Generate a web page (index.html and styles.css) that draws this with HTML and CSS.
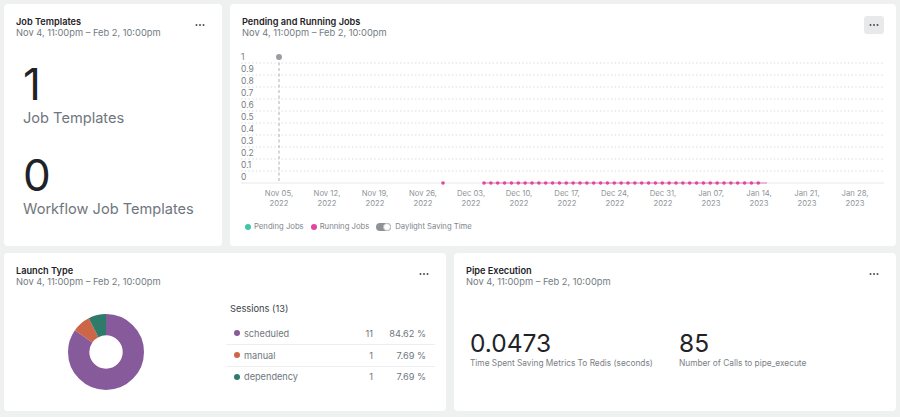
FILE: index.html
```html
<!DOCTYPE html>
<html lang="en">
<head>
<meta charset="utf-8">
<title>Dashboard</title>
<link rel="stylesheet" href="styles.css">
</head>
<body>
<main class="dashboard">
  <div class="row row-top">
    <section class="card card-jobs">
      <header class="card-header">
        <div class="titles">
          <h2 class="title">Job Templates</h2>
          <div class="subtitle">Nov 4, 11:00pm – Feb 2, 10:00pm</div>
        </div>
        <button class="menu" aria-label="More"><svg width="10" height="4" viewBox="0 0 10 4"><circle cx="1.5" cy="2" r="1"/><circle cx="5" cy="2" r="1"/><circle cx="8.5" cy="2" r="1"/></svg></button>
      </header>
      <div class="counts">
        <div class="count">
          <div class="count-value">1</div>
          <div class="count-label">Job Templates</div>
        </div>
        <div class="count">
          <div class="count-value">0</div>
          <div class="count-label">Workflow Job Templates</div>
        </div>
      </div>
    </section>

    <section class="card card-chart">
      <header class="card-header">
        <div class="titles">
          <h2 class="title">Pending and Running Jobs</h2>
          <div class="subtitle">Nov 4, 11:00pm – Feb 2, 10:00pm</div>
        </div>
        <button class="menu menu-active" aria-label="More"><svg width="10" height="4" viewBox="0 0 10 4"><circle cx="1.5" cy="2" r="1"/><circle cx="5" cy="2" r="1"/><circle cx="8.5" cy="2" r="1"/></svg></button>
      </header>
      <svg class="chart" width="642" height="160" viewBox="0 0 642 160">
        <g class="grid">
          <line x1="-1" x2="642" y1="13" y2="13"/>
          <line x1="-1" x2="642" y1="25" y2="25"/>
          <line x1="-1" x2="642" y1="37" y2="37"/>
          <line x1="-1" x2="642" y1="49" y2="49"/>
          <line x1="-1" x2="642" y1="61" y2="61"/>
          <line x1="-1" x2="642" y1="73" y2="73"/>
          <line x1="-1" x2="642" y1="85" y2="85"/>
          <line x1="-1" x2="642" y1="97" y2="97"/>
          <line x1="-1" x2="642" y1="109" y2="109"/>
          <line x1="-1" x2="642" y1="121" y2="121"/>
        </g>
        <line class="axis" x1="-1" x2="642" y1="133" y2="133"/>
        <g class="ylabels">
          <text x="-1" y="10">1</text>
          <text x="-1" y="22">0.9</text>
          <text x="-1" y="34">0.8</text>
          <text x="-1" y="46">0.7</text>
          <text x="-1" y="58">0.6</text>
          <text x="-1" y="70">0.5</text>
          <text x="-1" y="82">0.4</text>
          <text x="-1" y="94">0.3</text>
          <text x="-1" y="106">0.2</text>
          <text x="-1" y="118">0.1</text>
          <text x="-1" y="130">0</text>
        </g>
        <line class="marker" x1="37" x2="37" y1="7" y2="133"/>
        <circle class="marker-dot" cx="37" cy="7" r="3"/>
        <g class="xlabels">
          <text x="37" y="146.4">Nov 05,</text><text x="37" y="155.6">2022</text>
          <text x="85" y="146.4">Nov 12,</text><text x="85" y="155.6">2022</text>
          <text x="133" y="146.4">Nov 19,</text><text x="133" y="155.6">2022</text>
          <text x="181" y="146.4">Nov 26,</text><text x="181" y="155.6">2022</text>
          <text x="229" y="146.4">Dec 03,</text><text x="229" y="155.6">2022</text>
          <text x="277" y="146.4">Dec 10,</text><text x="277" y="155.6">2022</text>
          <text x="325" y="146.4">Dec 17,</text><text x="325" y="155.6">2022</text>
          <text x="373" y="146.4">Dec 24,</text><text x="373" y="155.6">2022</text>
          <text x="421" y="146.4">Dec 31,</text><text x="421" y="155.6">2022</text>
          <text x="469" y="146.4">Jan 07,</text><text x="469" y="155.6">2023</text>
          <text x="517" y="146.4">Jan 14,</text><text x="517" y="155.6">2023</text>
          <text x="565" y="146.4">Jan 21,</text><text x="565" y="155.6">2023</text>
          <text x="613" y="146.4">Jan 28,</text><text x="613" y="155.6">2023</text>
        </g>
        <line class="running-line" x1="242" x2="525" y1="133" y2="133"/>
        <g class="running-dots" id="dots">
          <circle cx="201" cy="133" r="1.8"/>
        </g>
      </svg>
      <div class="legend">
        <span class="legend-item"><span class="dot dot-pending"></span>Pending Jobs</span>
        <span class="legend-item"><span class="dot dot-running"></span>Running Jobs</span>
        <span class="legend-item"><span class="toggle"><span class="knob"></span></span>Daylight Saving Time</span>
      </div>
    </section>
  </div>

  <div class="row row-bottom">
    <section class="card card-launch">
      <header class="card-header">
        <div class="titles">
          <h2 class="title">Launch Type</h2>
          <div class="subtitle">Nov 4, 11:00pm – Feb 2, 10:00pm</div>
        </div>
        <button class="menu" aria-label="More"><svg width="10" height="4" viewBox="0 0 10 4"><circle cx="1.5" cy="2" r="1"/><circle cx="5" cy="2" r="1"/><circle cx="8.5" cy="2" r="1"/></svg></button>
      </header>
      <div class="launch-body">
        <svg class="donut" width="76" height="76" viewBox="-38 -38 76 76">
          <g transform="rotate(-90)">
            <circle r="27.35" class="seg seg-scheduled" stroke-dasharray="145.41 171.85" stroke-dashoffset="0"/>
            <circle r="27.35" class="seg seg-manual" stroke-dasharray="13.22 171.85" stroke-dashoffset="-145.41"/>
            <circle r="27.35" class="seg seg-dependency" stroke-dasharray="13.22 171.85" stroke-dashoffset="-158.63"/>
          </g>
        </svg>
        <div class="sessions">
          <div class="sessions-title">Sessions (13)</div>
          <div class="session-row">
            <span class="session-name"><span class="dot dot-scheduled"></span>scheduled</span>
            <span class="session-count">11</span>
            <span class="session-pct">84.62 %</span>
          </div>
          <div class="session-row">
            <span class="session-name"><span class="dot dot-manual"></span>manual</span>
            <span class="session-count">1</span>
            <span class="session-pct">7.69 %</span>
          </div>
          <div class="session-row">
            <span class="session-name"><span class="dot dot-dependency"></span>dependency</span>
            <span class="session-count">1</span>
            <span class="session-pct">7.69 %</span>
          </div>
        </div>
      </div>
    </section>

    <section class="card card-pipe">
      <header class="card-header">
        <div class="titles">
          <h2 class="title">Pipe Execution</h2>
          <div class="subtitle">Nov 4, 11:00pm – Feb 2, 10:00pm</div>
        </div>
        <button class="menu" aria-label="More"><svg width="10" height="4" viewBox="0 0 10 4"><circle cx="1.5" cy="2" r="1"/><circle cx="5" cy="2" r="1"/><circle cx="8.5" cy="2" r="1"/></svg></button>
      </header>
      <div class="pipe-stats">
        <div class="pipe-stat pipe-stat-first">
          <div class="pipe-value">0.0473</div>
          <div class="pipe-label">Time Spent Saving Metrics To Redis (seconds)</div>
        </div>
        <div class="pipe-stat">
          <div class="pipe-value">85</div>
          <div class="pipe-label">Number of Calls to pipe_execute</div>
        </div>
      </div>
    </section>
  </div>
</main>
<script>
  (function () {
    var g = document.getElementById('dots');
    var ns = 'http://www.w3.org/2000/svg';
    for (var i = 0; i <= 40; i++) {
      var c = document.createElementNS(ns, 'circle');
      c.setAttribute('cx', (242 + i * 6.857).toFixed(2));
      c.setAttribute('cy', '133');
      c.setAttribute('r', '1.8');
      g.appendChild(c);
    }
  })();
</script>
</body>
</html>
```

FILE: styles.css
```css
* { box-sizing: border-box; }

html, body {
  margin: 0;
  padding: 0;
  background: #eff1f1;
  font-family: Inter, "Noto Sans", "Liberation Sans", sans-serif;
  color: #1f2328;
}

.dashboard {
  display: flex;
  flex-direction: column;
  gap: 7px;
  padding: 4px;
  width: 900px;
}

.row {
  display: flex;
  gap: 8px;
}

.row-top { height: 242px; }
.row-bottom { height: 158px; }

.card {
  background: #ffffff;
  border-radius: 4px;
  padding: 12px 12px 0 12px;
  overflow: hidden;
}

.card-jobs { width: 218px; flex: none; }
.card-chart { flex: 1; }
.card-launch, .card-pipe { flex: 1; }

.card-header {
  display: flex;
  justify-content: space-between;
  align-items: flex-start;
  height: 25px;
}

.title {
  margin: 0;
  font-size: 9.2px;
  line-height: 11px;
  font-weight: 600;
  color: #1f2328;
}

.subtitle {
  font-size: 9.3px;
  line-height: 12px;
  color: #737b82;
}

.menu {
  width: 20px;
  height: 18px;
  margin-top: 0;
  border: 0;
  padding: 0;
  background: transparent;
  border-radius: 3px;
  display: flex;
  align-items: center;
  justify-content: center;
  fill: #4a4f55;
}

.menu-active { background: #e7e9ea; }

/* Job templates */
.counts {
  padding-left: 7px;
  margin-top: 21px;
  display: flex;
  flex-direction: column;
  gap: 26px;
}

.count-value {
  font-size: 44px;
  line-height: 44px;
  font-weight: 400;
  color: #1f2328;
}

.count-label {
  margin-top: 3px;
  font-size: 14.6px;
  line-height: 18px;
  color: #6f767d;
}

/* Chart */
.chart {
  display: block;
  margin-top: 9px;
  overflow: visible;
}

.grid line {
  stroke: #d9dcde;
  stroke-width: 1;
  stroke-dasharray: 1.5 2.2;
}

.axis {
  stroke: #e6e8e9;
  stroke-width: 1;
}

.ylabels text {
  font-size: 8.5px;
  fill: #7a8086;
}

.xlabels text {
  font-size: 7.7px;
  fill: #8f959a;
  text-anchor: middle;
}

.marker {
  stroke: #b9bcbf;
  stroke-width: 1.2;
  stroke-dasharray: 3 2.5;
}

.marker-dot { fill: #9a9ea2; }

.running-line {
  stroke: #e9a3cc;
  stroke-width: 1.4;
}

.running-dots circle { fill: #e0469f; }

.legend {
  display: flex;
  align-items: center;
  gap: 7px;
  margin-top: 11px;
  padding-left: 3px;
  font-size: 7.7px;
  line-height: 12px;
  color: #80868c;
}

.legend-item {
  display: flex;
  align-items: center;
  gap: 3px;
}

.dot {
  display: inline-block;
  width: 6px;
  height: 6px;
  border-radius: 50%;
}

.dot-pending { background: #3ec6a8; }
.dot-running { background: #e0469f; }

.toggle {
  position: relative;
  width: 15px;
  height: 8px;
  border-radius: 4px;
  background: #8e9296;
  margin-right: 1px;
}

.knob {
  position: absolute;
  right: 0;
  top: 0;
  width: 8px;
  height: 8px;
  border-radius: 50%;
  background: #ffffff;
  border: 1px solid #c2c5c8;
}

/* Launch type */
.launch-body {
  display: flex;
  align-items: flex-start;
}

.donut {
  display: block;
  margin-left: 51.5px;
  margin-top: 23.5px;
  flex: none;
}

.seg {
  fill: none;
  stroke-width: 21.3;
}

.seg-scheduled { stroke: #875a9b; }
.seg-manual { stroke: #cc6646; }
.seg-dependency { stroke: #2e7a6b; }

.sessions {
  margin-left: auto;
  width: 209px;
  margin-right: -1px;
  margin-top: 13px;
}

.sessions-title {
  padding-left: 4px;
  font-size: 9.3px;
  line-height: 12px;
  color: #3d4349;
  margin-bottom: 7.5px;
}

.session-row {
  display: flex;
  align-items: center;
  height: 21.5px;
  padding-left: 8px;
  font-size: 9.2px;
  color: #6f767d;
}

.session-row + .session-row {
  border-top: 1px solid #eceeef;
}

.session-name {
  flex: 1;
  display: flex;
  align-items: center;
  gap: 4px;
}

.session-count {
  width: 30px;
  text-align: right;
}

.session-pct {
  width: 53px;
  text-align: right;
  margin-right: 9px;
}

.dot-scheduled { background: #875a9b; }
.dot-manual { background: #cc6646; }
.dot-dependency { background: #2e7a6b; }

/* Pipe execution */
.pipe-stats {
  display: flex;
  margin-top: 39.5px;
  padding-left: 4px;
}

.pipe-stat-first { width: 209px; }

.pipe-value {
  font-size: 24.5px;
  line-height: 26px;
  color: #1f2328;
}

.pipe-label {
  margin-top: 1.5px;
  font-size: 8.3px;
  line-height: 12px;
  color: #7a8086;
}
```
